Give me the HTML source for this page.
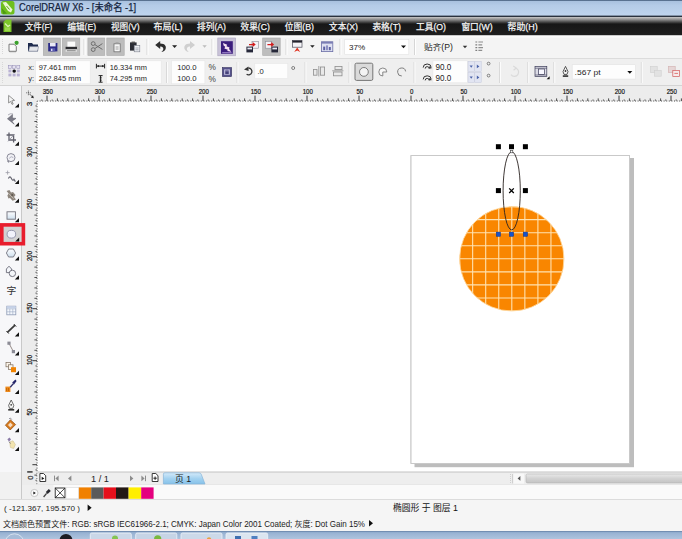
<!DOCTYPE html>
<html lang="zh"><head><meta charset="utf-8"><title>CorelDRAW X6</title>
<style>
html,body{margin:0;padding:0;background:#fff;overflow:hidden}
body{width:682px;height:539px;position:relative}
svg{display:block;position:absolute;left:0;top:0;font-family:"Liberation Sans","Noto Sans CJK SC",sans-serif}
</style></head><body>
<svg width="682" height="539" viewBox="0 0 682 539">
<defs>
<linearGradient id="gTitle" x1="0" y1="0" x2="0" y2="1"><stop offset="0" stop-color="#a6bfdd"/><stop offset="0.35" stop-color="#b5cce8"/><stop offset="1" stop-color="#bfd5ee"/></linearGradient>
<linearGradient id="gMenu" x1="0" y1="0" x2="0" y2="1"><stop offset="0" stop-color="#2a323e"/><stop offset="0.055" stop-color="#2a323e"/><stop offset="0.085" stop-color="#c2c2c2"/><stop offset="0.2" stop-color="#8c8c8c"/><stop offset="0.33" stop-color="#454545"/><stop offset="0.42" stop-color="#171717"/><stop offset="1" stop-color="#1f1f1f"/></linearGradient>
<linearGradient id="gTab" x1="0" y1="0" x2="0" y2="1"><stop offset="0" stop-color="#d4eaf9"/><stop offset="0.5" stop-color="#a4d2f0"/><stop offset="1" stop-color="#86c2ea"/></linearGradient>
<linearGradient id="gScroll" x1="0" y1="0" x2="0" y2="1"><stop offset="0" stop-color="#e9e9e9"/><stop offset="0.5" stop-color="#d2d2d2"/><stop offset="1" stop-color="#c4c4c4"/></linearGradient>
<linearGradient id="gTask" x1="0" y1="0" x2="0" y2="1"><stop offset="0" stop-color="#93aed0"/><stop offset="1" stop-color="#aec4de"/></linearGradient>
</defs>
<rect x="0" y="0" width="682" height="539" fill="#ffffff" />
<rect x="0" y="0" width="682" height="16" fill="url(#gTitle)" />
<rect x="0" y="0" width="682" height="0.8" fill="#465e7e" />
<rect x="0" y="15.6" width="682" height="20" fill="url(#gMenu)" />
<rect x="0" y="35.6" width="682" height="22.4" fill="#f4f4f4" />
<rect x="0" y="35.6" width="682" height="2" fill="#fbfbfb" />
<rect x="0" y="58" width="682" height="28" fill="#efefef" />
<line x1="0" y1="58.5" x2="682" y2="58.5" stroke="#dcdcdc" stroke-width="1" />
<rect x="22" y="86" width="660" height="15.5" fill="#ececec" />
<line x1="0" y1="85.5" x2="682" y2="85.5" stroke="#d4d4d4" stroke-width="1" />
<rect x="0" y="86" width="22" height="414" fill="#f7f7f9" />
<line x1="21.5" y1="86" x2="21.5" y2="486" stroke="#c9c9c9" stroke-width="1" />
<rect x="22" y="101" width="15.5" height="385" fill="#ececec" />
<rect x="37.5" y="101.5" width="644.5" height="370" fill="#ffffff" />
<g><rect x="1" y="1" width="13.5" height="13.5" rx="2.5" fill="#6fbf1e"/><path d="M2.5 2.5 L6 2 L12.5 9.5 L11 12.5 L8 11 Z" fill="#eaf7d2"/><path d="M1.5 8 L7 13.5 L3 14 Z" fill="#4e9a12"/><path d="M6.5 6 L9.5 9.5" stroke="#5aa818" stroke-width="1"/></g>
<text x="19" y="11.2" font-size="10.3" fill="#16263f" textLength="117" lengthAdjust="spacingAndGlyphs" stroke="#16263f" stroke-width="0.25">CorelDRAW X6 - [未命名 -1]</text>
<g><path d="M3.5 22 L6 19.5 L11.5 19.5 L11.5 32 L3.5 32 Z" fill="#7cc62a"/><path d="M5 23.5 L8 26.5 L10 25" stroke="#d8f0b0" stroke-width="1.4" fill="none"/><rect x="5" y="27.5" width="5" height="3.5" fill="#9bd84c"/></g>
<text x="25" y="29.9" font-size="9.3" fill="#f6f6f6" textLength="27.4" lengthAdjust="spacingAndGlyphs" stroke="#f6f6f6" stroke-width="0.25">文件(F)</text>
<text x="67.5" y="29.9" font-size="9.3" fill="#f6f6f6" textLength="28.5" lengthAdjust="spacingAndGlyphs" stroke="#f6f6f6" stroke-width="0.25">编辑(E)</text>
<text x="111" y="29.9" font-size="9.3" fill="#f6f6f6" textLength="28.7" lengthAdjust="spacingAndGlyphs" stroke="#f6f6f6" stroke-width="0.25">视图(V)</text>
<text x="153.5" y="29.9" font-size="9.3" fill="#f6f6f6" textLength="29.0" lengthAdjust="spacingAndGlyphs" stroke="#f6f6f6" stroke-width="0.25">布局(L)</text>
<text x="197" y="29.9" font-size="9.3" fill="#f6f6f6" textLength="29" lengthAdjust="spacingAndGlyphs" stroke="#f6f6f6" stroke-width="0.25">排列(A)</text>
<text x="240.6" y="29.9" font-size="9.3" fill="#f6f6f6" textLength="29.2" lengthAdjust="spacingAndGlyphs" stroke="#f6f6f6" stroke-width="0.25">效果(C)</text>
<text x="284.7" y="29.9" font-size="9.3" fill="#f6f6f6" textLength="29.3" lengthAdjust="spacingAndGlyphs" stroke="#f6f6f6" stroke-width="0.25">位图(B)</text>
<text x="329" y="29.9" font-size="9.3" fill="#f6f6f6" textLength="29" lengthAdjust="spacingAndGlyphs" stroke="#f6f6f6" stroke-width="0.25">文本(X)</text>
<text x="372.4" y="29.9" font-size="9.3" fill="#f6f6f6" textLength="28.6" lengthAdjust="spacingAndGlyphs" stroke="#f6f6f6" stroke-width="0.25">表格(T)</text>
<text x="416" y="29.9" font-size="9.3" fill="#f6f6f6" textLength="30" lengthAdjust="spacingAndGlyphs" stroke="#f6f6f6" stroke-width="0.25">工具(O)</text>
<text x="461.4" y="29.9" font-size="9.3" fill="#f6f6f6" textLength="31.2" lengthAdjust="spacingAndGlyphs" stroke="#f6f6f6" stroke-width="0.25">窗口(W)</text>
<text x="507.5" y="29.9" font-size="9.3" fill="#f6f6f6" textLength="30.2" lengthAdjust="spacingAndGlyphs" stroke="#f6f6f6" stroke-width="0.25">帮助(H)</text>
<line x1="2.5" y1="39" x2="2.5" y2="55" stroke="#d8d8d8" stroke-width="1" stroke-dasharray="1 1"/>
<g><path d="M9 44.2 L14 44.2 L16.3 46.5 L16.3 51.3 L9 51.3 Z" fill="#fafafa" stroke="#6c6c6c" stroke-width="0.9"/><circle cx="16.6" cy="42.8" r="2.1" fill="#3aa12c"/><path d="M9.5 52.6 H16" stroke="#ddd" stroke-width="1"/></g>
<g><path d="M28 43 L32 43 L33.2 44.6 L38 44.6 L38 51.2 L28 51.2 Z" fill="#1e2b4d"/><path d="M29.6 46.6 L38.6 46.6 L37.6 51.2 L28.6 51.2 Z" fill="#e4e6ea" stroke="#6a7388" stroke-width="0.5"/></g>
<rect x="43.3" y="38" width="17.1" height="17.5" fill="#bdbdbd" stroke="#a8a8a8" stroke-width="0.6"/>
<g><rect x="48.2" y="43" width="9.2" height="8.4" fill="#2b2b88"/><rect x="50" y="43" width="5.6" height="3.4" fill="#e9e9f6"/><rect x="50.4" y="48.2" width="4.8" height="3.2" fill="#5b5bb0"/><rect x="51" y="48.8" width="1.4" height="2.2" fill="#dcdcf4"/></g>
<rect x="62.3" y="38" width="17.5" height="17.5" fill="#bdbdbd" stroke="#a8a8a8" stroke-width="0.6"/>
<g><rect x="67.4" y="41.6" width="7.8" height="5.6" fill="#fbfbfb"/><rect x="65.6" y="46.8" width="11.4" height="2.6" fill="#2c2c30"/><rect x="65.6" y="49.4" width="11.4" height="2.4" fill="#dcdcdc"/><rect x="67" y="50.2" width="8.6" height="1" fill="#8a8a8a"/></g>
<line x1="84" y1="39" x2="84" y2="55" stroke="#d6d6d6" stroke-width="1" />
<line x1="85" y1="39" x2="85" y2="55" stroke="#ffffff" stroke-width="1" />
<rect x="87.9" y="38" width="16.9" height="17.5" fill="#bdbdbd" stroke="#a8a8a8" stroke-width="0.6"/>
<g fill="none" stroke="#6e6e6e" stroke-width="1"><circle cx="93.2" cy="43.6" r="1.9"/><circle cx="93.2" cy="49.6" r="1.9"/><path d="M94.8 44.6 L102.4 49.4 M94.8 48.6 L102.4 43.6"/></g>
<rect x="106.8" y="38" width="17.4" height="17.5" fill="#bdbdbd" stroke="#a8a8a8" stroke-width="0.6"/>
<g><rect x="114" y="43.8" width="6.2" height="8" fill="#f6f6f6" stroke="#707070" stroke-width="0.8"/><path d="M115.6 47 H118.6 M115.6 49 H118.6" stroke="#8a8a8a" stroke-width="0.8"/><rect x="115.6" y="42.4" width="3" height="1.6" fill="#9a9a9a"/></g>
<g><rect x="130" y="42.4" width="6.6" height="8.2" fill="#2a2c34"/><rect x="131.6" y="41.6" width="3.4" height="1.6" fill="#555"/><rect x="134.2" y="45.4" width="5.6" height="6.4" fill="#eef0f4" stroke="#7a7e8a" stroke-width="0.6"/><path d="M135.4 48 H138.6 M135.4 49.8 H138.6" stroke="#8a8f9e" stroke-width="0.7"/></g>
<line x1="147" y1="39" x2="147" y2="55" stroke="#d6d6d6" stroke-width="1" />
<line x1="148" y1="39" x2="148" y2="55" stroke="#ffffff" stroke-width="1" />
<g><path d="M155.2 45 L160.2 41 L160.2 43.6 C165.2 43.6 166.8 46.6 165.4 49.6 C164.6 51.2 163 52 161.4 52 C163.4 50.6 163.8 48.8 162.8 47.6 C162.2 46.8 161.2 46.5 160.2 46.5 L160.2 49 Z" fill="#2e2e2e"/></g>
<path d="M172.1 45.15 L177.1 45.15 L174.6 47.949999999999996 Z" fill="#222"/>
<g><path d="M195 45 L190 41 L190 43.6 C185 43.6 183.4 46.6 184.8 49.6 C185.6 51.2 187.2 52 188.8 52 C186.8 50.6 186.4 48.8 187.4 47.6 C188 46.8 189 46.5 190 46.5 L190 49 Z" fill="#cfcfcf"/></g>
<path d="M202.4 45.3 L206.79999999999998 45.3 L204.6 47.8 Z" fill="#bdbdbd"/>
<line x1="212" y1="39" x2="212" y2="55" stroke="#d6d6d6" stroke-width="1" />
<line x1="213" y1="39" x2="213" y2="55" stroke="#ffffff" stroke-width="1" />
<rect x="217.8" y="38" width="17.8" height="17.8" fill="#c9c3d8" stroke="#aaa3bd" stroke-width="0.6"/>
<g><rect x="221" y="41.2" width="11.8" height="12.6" fill="#3b1d7c"/><path d="M223 43 L227.2 44.8 L226.4 46.2 L229.6 47.6 L229 49 L231.4 51.8 L227.2 51 L227.8 49.8 L224.4 48.4 L225.2 46.8 L223.6 45.6 Z" fill="#f6e2f2"/><rect x="222.2" y="52.2" width="9.4" height="1" fill="#a58bd0"/></g>
<g><rect x="252" y="41.4" width="6.4" height="6.8" fill="#f2f2f6" stroke="#8a8a96" stroke-width="0.6"/><rect x="246.4" y="46.6" width="6.6" height="5.8" fill="#26283a"/><rect x="247.4" y="47.6" width="4.6" height="1.8" fill="#e8e8f4"/><path d="M249 44.6 H254.4 M252.6 42.8 L254.8 44.6 L252.6 46.4" stroke="#d21c1c" stroke-width="1.2" fill="none"/></g>
<rect x="262.7" y="38" width="17.5" height="17.5" fill="#bdbdbd" stroke="#a8a8a8" stroke-width="0.6"/>
<g><rect x="265.4" y="41.4" width="6.4" height="6.8" fill="#f2f2f6" stroke="#8a8a96" stroke-width="0.6"/><rect x="271.4" y="46.6" width="6.6" height="5.8" fill="#26283a"/><rect x="272.4" y="47.6" width="4.6" height="1.8" fill="#e8e8f4"/><path d="M267.4 44.6 H272.8 M271 42.8 L273.2 44.6 L271 46.4" stroke="#d21c1c" stroke-width="1.2" fill="none"/></g>
<line x1="286" y1="39" x2="286" y2="55" stroke="#d6d6d6" stroke-width="1" />
<line x1="287" y1="39" x2="287" y2="55" stroke="#ffffff" stroke-width="1" />
<g><rect x="292.4" y="40.6" width="9.6" height="6.6" fill="#f4f4f8" stroke="#4a4a58" stroke-width="0.7"/><rect x="292.4" y="40.6" width="9.6" height="2" fill="#23232e"/><path d="M294.2 52 L297.2 47.6 L300.2 52 L297.2 50.4 Z" fill="#e0301e"/></g>
<path d="M310.09999999999997 45.25 L314.7 45.25 L312.4 47.849999999999994 Z" fill="#222"/>
<g><rect x="321.4" y="41.8" width="11.4" height="9.8" fill="#dfe1f1" stroke="#6a6da6" stroke-width="0.8"/><rect x="321.4" y="41.8" width="11.4" height="1.8" fill="#7a7db4"/><rect x="323.2" y="46.6" width="2" height="3.6" fill="#5c60a2"/><rect x="326" y="45.4" width="2" height="4.8" fill="#8d90c4"/><rect x="328.8" y="47" width="2" height="3.2" fill="#5c60a2"/></g>
<line x1="340" y1="39" x2="340" y2="55" stroke="#d6d6d6" stroke-width="1" />
<line x1="341" y1="39" x2="341" y2="55" stroke="#ffffff" stroke-width="1" />
<rect x="344.7" y="39.3" width="64.1" height="15.3" fill="#ffffff" stroke="#e2e2e2" stroke-width="0.6"/>
<text x="349" y="49.6" font-size="8.1" fill="#222" textLength="16.2" lengthAdjust="spacingAndGlyphs" >37%</text>
<path d="M401.0 45.55 L406.0 45.55 L403.5 48.349999999999994 Z" fill="#111"/>
<line x1="414.5" y1="39" x2="414.5" y2="55" stroke="#d6d6d6" stroke-width="1" />
<line x1="415.5" y1="39" x2="415.5" y2="55" stroke="#ffffff" stroke-width="1" />
<text x="424" y="49.8" font-size="8.4" fill="#222" textLength="28.8" lengthAdjust="spacingAndGlyphs" >贴齐(P)</text>
<path d="M462.8 45.699999999999996 L467.2 45.699999999999996 L465 48.199999999999996 Z" fill="#333"/>
<g stroke="#7e7e7e" stroke-width="1.2"><path d="M475.4 42 H477.2 M475.4 44.8 H477.2 M475.4 47.6 H477.2 M475.4 50.4 H477.2"/><path d="M478.4 42 H483 M478.4 44.8 H482.2 M478.4 47.6 H483 M478.4 50.4 H482.2" stroke="#8e8e8e"/></g>
<line x1="2.5" y1="62" x2="2.5" y2="83" stroke="#d8d8d8" stroke-width="1" stroke-dasharray="1 1"/>
<rect x="8.4" y="65.6" width="3" height="2.8" fill="#e4e1f0" stroke="#8f88b4" stroke-width="0.5"/>
<rect x="12.6" y="65.6" width="3" height="2.8" fill="#e4e1f0" stroke="#8f88b4" stroke-width="0.5"/>
<rect x="16.8" y="65.6" width="3" height="2.8" fill="#e4e1f0" stroke="#8f88b4" stroke-width="0.5"/>
<rect x="8.4" y="69.6" width="3" height="2.8" fill="#b9b2d4" stroke="#8f88b4" stroke-width="0"/>
<rect x="12.6" y="69.6" width="3" height="2.8" fill="#b9b2d4" stroke="#8f88b4" stroke-width="0"/>
<rect x="16.8" y="69.6" width="3" height="2.8" fill="#b9b2d4" stroke="#8f88b4" stroke-width="0"/>
<rect x="8.4" y="73.6" width="3" height="2.8" fill="#b9b2d4" stroke="#8f88b4" stroke-width="0"/>
<rect x="12.6" y="73.6" width="3" height="2.8" fill="#b9b2d4" stroke="#8f88b4" stroke-width="0"/>
<rect x="16.8" y="73.6" width="3" height="2.8" fill="#b9b2d4" stroke="#8f88b4" stroke-width="0"/>
<circle cx="14.2" cy="71.1" r="1.7" fill="#111"/>
<text x="28.2" y="70" font-size="7.6" fill="#333" >x:</text>
<text x="28.2" y="81.4" font-size="7.6" fill="#333" >y:</text>
<rect x="35.6" y="60.8" width="54.6" height="23" fill="#fdfdfd" stroke="#e6e6e6" stroke-width="0.6"/>
<text x="38.7" y="69.8" font-size="7.5" fill="#1e1e1e" textLength="37.4" lengthAdjust="spacingAndGlyphs" >97.461 mm</text>
<text x="38.7" y="81.2" font-size="7.5" fill="#1e1e1e" textLength="42.4" lengthAdjust="spacingAndGlyphs" >262.845 mm</text>
<g stroke="#222" stroke-width="1" fill="#222"><path d="M96.4 63.8 V68.4 M104.6 63.8 V68.4 M97 66.1 H104" fill="none"/><path d="M97 66.1 L99 64.9 V67.3 Z M104 66.1 L102 64.9 V67.3 Z" stroke="none"/><path d="M98.6 75.6 H102.6 M98.6 82.2 H102.6 M100.6 76 V82" fill="none"/><path d="M100.6 76.2 L99.3 78.2 H101.9 Z M100.6 81.8 L99.3 79.8 H101.9 Z" stroke="none"/></g>
<rect x="106.4" y="60.8" width="54.8" height="23" fill="#fdfdfd" stroke="#e6e6e6" stroke-width="0.6"/>
<text x="109.7" y="69.8" font-size="7.5" fill="#1e1e1e" textLength="37.2" lengthAdjust="spacingAndGlyphs" >16.334 mm</text>
<text x="109.7" y="81.2" font-size="7.5" fill="#1e1e1e" textLength="37.2" lengthAdjust="spacingAndGlyphs" >74.295 mm</text>
<line x1="166.5" y1="62" x2="166.5" y2="83" stroke="#d9d9d9" stroke-width="1" />
<line x1="167.5" y1="62" x2="167.5" y2="83" stroke="#fcfcfc" stroke-width="1" />
<rect x="171.5" y="60.8" width="33.4" height="23" fill="#fdfdfd" stroke="#e6e6e6" stroke-width="0.6"/>
<text x="177.2" y="69.8" font-size="7.5" fill="#1e1e1e" textLength="19.4" lengthAdjust="spacingAndGlyphs" >100.0</text>
<text x="177.2" y="81.2" font-size="7.5" fill="#1e1e1e" textLength="19.4" lengthAdjust="spacingAndGlyphs" >100.0</text>
<text x="208.6" y="70.2" font-size="8.6" fill="#444" textLength="7.4" lengthAdjust="spacingAndGlyphs" >%</text>
<text x="208.6" y="81.6" font-size="8.6" fill="#444" textLength="7.4" lengthAdjust="spacingAndGlyphs" >%</text>
<g><rect x="222.4" y="67.6" width="9.2" height="9" fill="#55518a" stroke="#34315e" stroke-width="0.6"/><rect x="224.2" y="69.4" width="5.6" height="5.4" fill="#cfcce8"/><rect x="225.2" y="71.2" width="3.6" height="3" fill="#45417a"/><path d="M225.8 71.2 V70.2 H228.2 V71.2" stroke="#45417a" stroke-width="0.7" fill="none"/></g>
<line x1="237" y1="62" x2="237" y2="83" stroke="#d9d9d9" stroke-width="1" />
<line x1="238" y1="62" x2="238" y2="83" stroke="#fcfcfc" stroke-width="1" />
<g><path d="M248.4 68 A3.4 3.4 0 1 1 246.6 74.2" fill="none" stroke="#333" stroke-width="1.3"/><path d="M244 69.6 L248.4 66.6 L248.6 71 Z" fill="#333"/></g>
<rect x="254.8" y="63.3" width="33" height="15.3" fill="#fdfdfd" stroke="#e6e6e6" stroke-width="0.6"/>
<text x="257.4" y="74" font-size="7.6" fill="#1e1e1e" >.0</text>
<circle cx="293.2" cy="68" r="1.5" fill="none" stroke="#555" stroke-width="0.7"/>
<line x1="305" y1="62" x2="305" y2="83" stroke="#d9d9d9" stroke-width="1" />
<line x1="306" y1="62" x2="306" y2="83" stroke="#fcfcfc" stroke-width="1" />
<g fill="#e9e9e9" stroke="#8e8e8e" stroke-width="0.8"><rect x="313.4" y="69.4" width="3.6" height="5.8"/><rect x="320.4" y="67" width="4.2" height="8.2"/><path d="M318.8 66 V76.4" /></g>
<g fill="#e9e9e9" stroke="#8e8e8e" stroke-width="0.8"><rect x="335" y="66.4" width="7" height="3.2"/><rect x="333.4" y="72" width="8.6" height="3.8"/><path d="M332.2 70.8 H343.4"/></g>
<line x1="349" y1="62" x2="349" y2="83" stroke="#d9d9d9" stroke-width="1" />
<line x1="350" y1="62" x2="350" y2="83" stroke="#fcfcfc" stroke-width="1" />
<rect x="355" y="63.2" width="17.8" height="17.2" rx="1.5" fill="#dadada" stroke="#767676" stroke-width="1"/>
<circle cx="363.9" cy="71.9" r="4.4" fill="#f4f4f4" stroke="#6f6f6f" stroke-width="0.9"/>
<path d="M382.8 72 L386.8 72 A4 4 0 1 0 382.8 76 Z" fill="#f8f8f8" stroke="#7d7d7d" stroke-width="0.9"/>
<path d="M405.6 71.4 A4 4 0 1 0 401.8 76" fill="none" stroke="#7d7d7d" stroke-width="1"/>
<line x1="414" y1="62" x2="414" y2="83" stroke="#d9d9d9" stroke-width="1" />
<line x1="415" y1="62" x2="415" y2="83" stroke="#fcfcfc" stroke-width="1" />
<g fill="none" stroke="#333" stroke-width="1"><path d="M423.2 67.60000000000001 A4 3.6 0 1 1 431.2 67.60000000000001"/><path d="M425.2 68.60000000000001 A2 2 0 1 1 429.2 68.60000000000001"/><path d="M429.8 66.0 L431.6 68.4 L428.6 68.4 Z" fill="#333" stroke="none"/></g>
<g fill="none" stroke="#333" stroke-width="1"><path d="M423.2 79.4 A4 3.6 0 1 1 431.2 79.4"/><path d="M425.2 80.4 A2 2 0 1 1 429.2 80.4"/><path d="M429.8 77.8 L431.6 80.2 L428.6 80.2 Z" fill="#333" stroke="none"/></g>
<rect x="432.9" y="60.8" width="34.4" height="22" fill="#fdfdfd" stroke="#e6e6e6" stroke-width="0.6"/>
<text x="435.4" y="70" font-size="8.2" fill="#1e1e1e" textLength="15.8" lengthAdjust="spacingAndGlyphs" >90.0</text>
<text x="435.4" y="81.4" font-size="8.2" fill="#1e1e1e" textLength="15.8" lengthAdjust="spacingAndGlyphs" >90.0</text>
<rect x="468" y="61.4" width="6.4" height="10" fill="#e2e5f2" stroke="#c4c8dc" stroke-width="0.5"/><rect x="474.8" y="61.4" width="6.4" height="10" fill="#e2e5f2" stroke="#c4c8dc" stroke-width="0.5"/>
<path d="M469.6 65.4 H472.8 L471.2 67.8 Z" fill="#4a62a8"/><path d="M476.8 64.6 V68.2 L479.4 66.4 Z" fill="#4a62a8"/>
<rect x="468" y="72.4" width="6.4" height="10" fill="#e2e5f2" stroke="#c4c8dc" stroke-width="0.5"/><rect x="474.8" y="72.4" width="6.4" height="10" fill="#e2e5f2" stroke="#c4c8dc" stroke-width="0.5"/>
<path d="M469.6 76.4 H472.8 L471.2 78.80000000000001 Z" fill="#4a62a8"/><path d="M476.8 75.60000000000001 V79.2 L479.4 77.4 Z" fill="#4a62a8"/>
<circle cx="488.6" cy="63.6" r="1.4" fill="none" stroke="#555" stroke-width="0.7"/><circle cx="488.6" cy="75.6" r="1.4" fill="none" stroke="#555" stroke-width="0.7"/>
<line x1="499.5" y1="62" x2="499.5" y2="83" stroke="#d9d9d9" stroke-width="1" />
<line x1="500.5" y1="62" x2="500.5" y2="83" stroke="#fcfcfc" stroke-width="1" />
<g fill="none" stroke="#dadada" stroke-width="1.2"><path d="M511 74.6 A4.2 4.2 0 1 0 515 68"/><path d="M513.2 66 L516.2 68 L513.6 70.2"/></g>
<line x1="527.8" y1="62" x2="527.8" y2="83" stroke="#d9d9d9" stroke-width="1" />
<line x1="528.8" y1="62" x2="528.8" y2="83" stroke="#fcfcfc" stroke-width="1" />
<g><rect x="535" y="66.4" width="11.8" height="10.2" fill="#dcdce6" stroke="#3c3c58" stroke-width="0.7"/><rect x="538.6" y="69" width="6" height="5.4" fill="#f8f8ff" stroke="#3c3c58" stroke-width="0.7"/><path d="M535 68.2 H547 M535 75 H547" stroke="#3c3c58" stroke-width="0.6"/><path d="M549.6 76.2 V79.2 H546.6 Z" fill="#111"/></g>
<line x1="553.8" y1="62" x2="553.8" y2="83" stroke="#d9d9d9" stroke-width="1" />
<line x1="554.8" y1="62" x2="554.8" y2="83" stroke="#fcfcfc" stroke-width="1" />
<g><path d="M565.5 66.4 L568 71.6 L567 74.4 H564 L563 71.6 Z" fill="#f4f4f4" stroke="#333" stroke-width="0.8"/><circle cx="565.5" cy="71" r="0.9" fill="#333"/><rect x="562.8" y="75.2" width="5.4" height="1.8" fill="#444"/></g>
<rect x="572.2" y="64.7" width="63.4" height="14.4" fill="#fdfdfd" stroke="#e2e2e2" stroke-width="0.6"/>
<text x="574.6" y="74.8" font-size="7.8" fill="#1e1e1e" textLength="26" lengthAdjust="spacingAndGlyphs" >.567 pt</text>
<path d="M627.3 70.95 L632.3 70.95 L629.8 73.75 Z" fill="#111"/>
<line x1="641.3" y1="62" x2="641.3" y2="83" stroke="#d9d9d9" stroke-width="1" />
<line x1="642.3" y1="62" x2="642.3" y2="83" stroke="#fcfcfc" stroke-width="1" />
<g fill="#e2e2e2" stroke="#cfcfcf" stroke-width="0.6"><rect x="650.6" y="66.6" width="6.6" height="5.8"/><rect x="654.6" y="70.4" width="6.6" height="5.8"/></g>
<g stroke-width="0.7"><rect x="668.6" y="66.6" width="6.6" height="5.8" fill="#e6d6d6" stroke="#d4b4b4"/><rect x="672.8" y="70.4" width="6.8" height="6.2" fill="#f6eaea" stroke="#d05a5a"/><path d="M674.4 73.4 H678" stroke="#d84848"/></g>
<line x1="37" y1="101" x2="682" y2="101" stroke="#4a4a4a" stroke-width="1" stroke-dasharray="1 1.6"/>
<path d="M47.0 95.6 V101 M99.0 95.6 V101 M151.0 95.6 V101 M203.0 95.6 V101 M255.0 95.6 V101 M307.0 95.6 V101 M359.0 95.6 V101 M411.0 95.6 V101 M463.0 95.6 V101 M515.0 95.6 V101 M567.0 95.6 V101 M619.0 95.6 V101 M671.0 95.6 V101" stroke="#222" stroke-width="0.9" fill="none"/>
<path d="M57.4 98.4 V101 M67.8 98.4 V101 M78.2 98.4 V101 M88.6 98.4 V101 M109.4 98.4 V101 M119.8 98.4 V101 M130.2 98.4 V101 M140.6 98.4 V101 M161.4 98.4 V101 M171.8 98.4 V101 M182.2 98.4 V101 M192.6 98.4 V101 M213.4 98.4 V101 M223.8 98.4 V101 M234.2 98.4 V101 M244.6 98.4 V101 M265.4 98.4 V101 M275.8 98.4 V101 M286.2 98.4 V101 M296.6 98.4 V101 M317.4 98.4 V101 M327.8 98.4 V101 M338.2 98.4 V101 M348.6 98.4 V101 M369.4 98.4 V101 M379.8 98.4 V101 M390.2 98.4 V101 M400.6 98.4 V101 M421.4 98.4 V101 M431.8 98.4 V101 M442.2 98.4 V101 M452.6 98.4 V101 M473.4 98.4 V101 M483.8 98.4 V101 M494.2 98.4 V101 M504.6 98.4 V101 M525.4 98.4 V101 M535.8 98.4 V101 M546.2 98.4 V101 M556.6 98.4 V101 M577.4 98.4 V101 M587.8 98.4 V101 M598.2 98.4 V101 M608.6 98.4 V101 M629.4 98.4 V101 M639.8 98.4 V101 M650.2 98.4 V101 M660.6 98.4 V101 M681.4 98.4 V101" stroke="#3a3a3a" stroke-width="0.9" fill="none"/>
<path d="M41.8 99.3 V101 M52.2 99.3 V101 M62.6 99.3 V101 M73.0 99.3 V101 M83.4 99.3 V101 M93.8 99.3 V101 M104.2 99.3 V101 M114.6 99.3 V101 M125.0 99.3 V101 M135.4 99.3 V101 M145.8 99.3 V101 M156.2 99.3 V101 M166.6 99.3 V101 M177.0 99.3 V101 M187.4 99.3 V101 M197.8 99.3 V101 M208.2 99.3 V101 M218.6 99.3 V101 M229.0 99.3 V101 M239.4 99.3 V101 M249.8 99.3 V101 M260.2 99.3 V101 M270.6 99.3 V101 M281.0 99.3 V101 M291.4 99.3 V101 M301.8 99.3 V101 M312.2 99.3 V101 M322.6 99.3 V101 M333.0 99.3 V101 M343.4 99.3 V101 M353.8 99.3 V101 M364.2 99.3 V101 M374.6 99.3 V101 M385.0 99.3 V101 M395.4 99.3 V101 M405.8 99.3 V101 M416.2 99.3 V101 M426.6 99.3 V101 M437.0 99.3 V101 M447.4 99.3 V101 M457.8 99.3 V101 M468.2 99.3 V101 M478.6 99.3 V101 M489.0 99.3 V101 M499.4 99.3 V101 M509.8 99.3 V101 M520.2 99.3 V101 M530.6 99.3 V101 M541.0 99.3 V101 M551.4 99.3 V101 M561.8 99.3 V101 M572.2 99.3 V101 M582.6 99.3 V101 M593.0 99.3 V101 M603.4 99.3 V101 M613.8 99.3 V101 M624.2 99.3 V101 M634.6 99.3 V101 M645.0 99.3 V101 M655.4 99.3 V101 M665.8 99.3 V101 M676.2 99.3 V101" stroke="#6a6a6a" stroke-width="0.9" fill="none"/>
<text x="47.8" y="94.3" font-size="7.6" fill="#111" textLength="10.2" lengthAdjust="spacingAndGlyphs" text-anchor="middle" stroke="#111" stroke-width="0.2">350</text>
<text x="99.8" y="94.3" font-size="7.6" fill="#111" textLength="10.2" lengthAdjust="spacingAndGlyphs" text-anchor="middle" stroke="#111" stroke-width="0.2">300</text>
<text x="151.8" y="94.3" font-size="7.6" fill="#111" textLength="10.2" lengthAdjust="spacingAndGlyphs" text-anchor="middle" stroke="#111" stroke-width="0.2">250</text>
<text x="203.8" y="94.3" font-size="7.6" fill="#111" textLength="10.2" lengthAdjust="spacingAndGlyphs" text-anchor="middle" stroke="#111" stroke-width="0.2">200</text>
<text x="255.8" y="94.3" font-size="7.6" fill="#111" textLength="10.2" lengthAdjust="spacingAndGlyphs" text-anchor="middle" stroke="#111" stroke-width="0.2">150</text>
<text x="307.8" y="94.3" font-size="7.6" fill="#111" textLength="10.2" lengthAdjust="spacingAndGlyphs" text-anchor="middle" stroke="#111" stroke-width="0.2">100</text>
<text x="359.8" y="94.3" font-size="7.6" fill="#111" textLength="6.8" lengthAdjust="spacingAndGlyphs" text-anchor="middle" stroke="#111" stroke-width="0.2">50</text>
<text x="411.8" y="94.3" font-size="7.6" fill="#111" textLength="3.4" lengthAdjust="spacingAndGlyphs" text-anchor="middle" stroke="#111" stroke-width="0.2">0</text>
<text x="463.8" y="94.3" font-size="7.6" fill="#111" textLength="6.8" lengthAdjust="spacingAndGlyphs" text-anchor="middle" stroke="#111" stroke-width="0.2">50</text>
<text x="515.8" y="94.3" font-size="7.6" fill="#111" textLength="10.2" lengthAdjust="spacingAndGlyphs" text-anchor="middle" stroke="#111" stroke-width="0.2">100</text>
<text x="567.8" y="94.3" font-size="7.6" fill="#111" textLength="10.2" lengthAdjust="spacingAndGlyphs" text-anchor="middle" stroke="#111" stroke-width="0.2">150</text>
<text x="619.8" y="94.3" font-size="7.6" fill="#111" textLength="10.2" lengthAdjust="spacingAndGlyphs" text-anchor="middle" stroke="#111" stroke-width="0.2">200</text>
<text x="671.8" y="94.3" font-size="7.6" fill="#111" textLength="10.2" lengthAdjust="spacingAndGlyphs" text-anchor="middle" stroke="#111" stroke-width="0.2">250</text>
<line x1="37" y1="101" x2="37" y2="486" stroke="#4a4a4a" stroke-width="1" stroke-dasharray="1 1.6"/>
<path d="M32.4 464.7 H37 M32.4 412.7 H37 M32.4 360.7 H37 M32.4 308.7 H37 M32.4 256.7 H37 M32.4 204.7 H37 M32.4 152.7 H37" stroke="#222" stroke-width="0.9" fill="none"/>
<path d="M34.4 475.1 H37 M34.4 454.3 H37 M34.4 443.9 H37 M34.4 433.5 H37 M34.4 423.1 H37 M34.4 402.3 H37 M34.4 391.9 H37 M34.4 381.5 H37 M34.4 371.1 H37 M34.4 350.3 H37 M34.4 339.9 H37 M34.4 329.5 H37 M34.4 319.1 H37 M34.4 298.3 H37 M34.4 287.9 H37 M34.4 277.5 H37 M34.4 267.1 H37 M34.4 246.3 H37 M34.4 235.9 H37 M34.4 225.5 H37 M34.4 215.1 H37 M34.4 194.3 H37 M34.4 183.9 H37 M34.4 173.5 H37 M34.4 163.1 H37 M34.4 142.3 H37 M34.4 131.9 H37 M34.4 121.5 H37 M34.4 111.1 H37" stroke="#3a3a3a" stroke-width="0.9" fill="none"/>
<path d="M35.3 480.3 H37 M35.3 469.9 H37 M35.3 459.5 H37 M35.3 449.1 H37 M35.3 438.7 H37 M35.3 428.3 H37 M35.3 417.9 H37 M35.3 407.5 H37 M35.3 397.1 H37 M35.3 386.7 H37 M35.3 376.3 H37 M35.3 365.9 H37 M35.3 355.5 H37 M35.3 345.1 H37 M35.3 334.7 H37 M35.3 324.3 H37 M35.3 313.9 H37 M35.3 303.5 H37 M35.3 293.1 H37 M35.3 282.7 H37 M35.3 272.3 H37 M35.3 261.9 H37 M35.3 251.5 H37 M35.3 241.1 H37 M35.3 230.7 H37 M35.3 220.3 H37 M35.3 209.9 H37 M35.3 199.5 H37 M35.3 189.1 H37 M35.3 178.7 H37 M35.3 168.3 H37 M35.3 157.9 H37 M35.3 147.5 H37 M35.3 137.1 H37 M35.3 126.7 H37 M35.3 116.3 H37 M35.3 105.9 H37" stroke="#6a6a6a" stroke-width="0.9" fill="none"/>
<text transform="translate(32.4,412.0) rotate(-90)" font-size="7.6" fill="#111" stroke="#111" stroke-width="0.2" text-anchor="middle" textLength="6.8" lengthAdjust="spacingAndGlyphs">50</text>
<text transform="translate(32.4,360.0) rotate(-90)" font-size="7.6" fill="#111" stroke="#111" stroke-width="0.2" text-anchor="middle" textLength="10.2" lengthAdjust="spacingAndGlyphs">100</text>
<text transform="translate(32.4,308.0) rotate(-90)" font-size="7.6" fill="#111" stroke="#111" stroke-width="0.2" text-anchor="middle" textLength="10.2" lengthAdjust="spacingAndGlyphs">150</text>
<text transform="translate(32.4,256.0) rotate(-90)" font-size="7.6" fill="#111" stroke="#111" stroke-width="0.2" text-anchor="middle" textLength="10.2" lengthAdjust="spacingAndGlyphs">200</text>
<text transform="translate(32.4,204.0) rotate(-90)" font-size="7.6" fill="#111" stroke="#111" stroke-width="0.2" text-anchor="middle" textLength="10.2" lengthAdjust="spacingAndGlyphs">250</text>
<text transform="translate(32.4,152.0) rotate(-90)" font-size="7.6" fill="#111" stroke="#111" stroke-width="0.2" text-anchor="middle" textLength="10.2" lengthAdjust="spacingAndGlyphs">300</text>
<text transform="translate(32.2,103.9) rotate(-90)" font-size="7.6" fill="#111" stroke="#111" stroke-width="0.2" text-anchor="middle">3</text>
<rect x="22" y="86" width="15.5" height="15.5" fill="#ececec" />
<g stroke="#444" stroke-width="0.8" fill="none"><path d="M28.4 90.6 V95.4 M26.2 92.8 H31" stroke-dasharray="1 0.8"/><path d="M29.4 93.8 L32.6 97"/><path d="M33.8 98.2 L30.8 97.4 L33 95.2 Z" fill="#222" stroke="none"/></g>
<rect x="27.2" y="471" width="5.4" height="1.8" fill="#555"/><text transform="translate(32.8,477.6) rotate(-90)" font-size="7.4" fill="#333" text-anchor="middle" stroke="#333" stroke-width="0.3">0</text>
<path d="M8.6 95.4 L14.6 100.4 L11.8 100.8 L13.2 104 L12 104.4 L10.6 101.4 L8.6 103 Z" fill="#f4f4f4" stroke="#7c7c7c" stroke-width="0.8"/>
<path d="M19.0 103.39999999999999 V107.6 H14.799999999999999 Z" fill="#111"/>
<g><path d="M7.4 118.8 L12.6 114.4 L12.4 118 L16 118.4 L12 121.2 L14.2 124.2 Z" fill="#7a7a86" stroke="#5a5a66" stroke-width="0.5"/><path d="M8 115 Q10 113 13 114" stroke="#9a9aa6" stroke-width="0.8" fill="none"/></g>
<path d="M19.0 122.19999999999999 V126.39999999999999 H14.799999999999999 Z" fill="#111"/>
<g stroke="#60606c" stroke-width="1.3" fill="none"><path d="M9 132.6 V140 H16"/><path d="M6.6 135 H13.6 V142.4"/><path d="M8 141.4 L14.6 134" stroke="#8a8a98" stroke-width="0.8"/></g>
<path d="M19.0 141.6 V145.8 H14.799999999999999 Z" fill="#111"/>
<g><circle cx="11" cy="157.6" r="4" fill="#f2f2f6" stroke="#8a8a98" stroke-width="1"/><path d="M9.2 158.4 Q11 155.4 13.4 157.6" stroke="#b0b0c0" stroke-width="1" fill="none"/><path d="M7.4 160.6 L9 162.4" stroke="#7a7a88" stroke-width="1.2"/></g>
<path d="M19.0 160.79999999999998 V165.0 H14.799999999999999 Z" fill="#111"/>
<g fill="none"><path d="M7.6 170.6 V174.6 M5.6 172.6 H9.6" stroke="#9a9aa6" stroke-width="0.8"/><path d="M8.4 178.4 Q10 175.4 11.4 178.4 T14 179.4 L15.4 181.6" stroke="#5e5e6a" stroke-width="1.1"/></g>
<path d="M19.0 179.79999999999998 V184.0 H14.799999999999999 Z" fill="#111"/>
<g><path d="M6.6 191 L9.4 190 L11 192.6 L13 192 L15.6 195 L14 197 L16 199.6 L12.6 200.8 L10 198 L8.4 198.4 L7.4 195.4 L8.6 193.6 Z" fill="#8e867e"/><path d="M8.6 193.4 L13.6 198.6" stroke="#c8c0b4" stroke-width="0.9"/><circle cx="12.2" cy="195" r="1" fill="#5c554e"/></g>
<path d="M19.0 198.6 V202.8 H14.799999999999999 Z" fill="#111"/>
<defs><linearGradient id="gRc" x1="0" y1="0" x2="0" y2="1"><stop offset="0" stop-color="#fdfdff"/><stop offset="1" stop-color="#cfe0ee"/></linearGradient></defs>
<rect x="7" y="211.8" width="8.4" height="7.4" fill="url(#gRc)" stroke="#70707c" stroke-width="0.9"/>
<path d="M19.0 218.0 V222.20000000000002 H14.799999999999999 Z" fill="#111"/>
<rect x="1.8" y="224.9" width="21.6" height="18.8" fill="#d2d2d2" stroke="#e81d2d" stroke-width="3.6"/>
<ellipse cx="11.4" cy="234.2" rx="4.3" ry="3.9" fill="#f1f2fb" stroke="#8c8fa6" stroke-width="0.9"/>
<path d="M19.2 237.4 V241.4 H15.2 Z" fill="#111"/>
<path d="M8.6 249 H13.4 L15.6 253 L13.4 257 H8.6 L6.4 253 Z" fill="url(#gRc)" stroke="#74747f" stroke-width="0.9"/>
<path d="M19.0 256.20000000000005 V260.40000000000003 H14.799999999999999 Z" fill="#111"/>
<g fill="#f4f6fa" stroke="#6c6c78" stroke-width="0.9"><path d="M6.4 269 L9 266.2 L11.6 269 V272.6 H6.4 Z"/><circle cx="12.4" cy="273.4" r="3.2"/></g>
<path d="M19.0 275.20000000000005 V279.40000000000003 H14.799999999999999 Z" fill="#111"/>
<text x="6.4" y="294.2" font-size="9.6" fill="#333" textLength="9.8" lengthAdjust="spacingAndGlyphs">字</text>
<g><rect x="6.8" y="306.2" width="9" height="8.6" fill="#f4f8fd" stroke="#8e9ab4" stroke-width="0.8"/><path d="M6.8 308.8 H15.8 M6.8 311.8 H15.8 M9.8 308.8 V314.8 M12.8 308.8 V314.8" stroke="#9aa6c0" stroke-width="0.6"/><rect x="6.8" y="306.2" width="9" height="2.2" fill="#c6d2e8"/></g>
<g><path d="M7.4 332.4 L15 325.2" stroke="#3a3a3a" stroke-width="1.8"/><path d="M6.4 331 L8.8 333.6 M13.8 324 L16.2 326.6" stroke="#3a3a3a" stroke-width="1"/></g>
<path d="M19.0 332.20000000000005 V336.40000000000003 H14.799999999999999 Z" fill="#111"/>
<g><path d="M9 343.4 L13.4 351.6" stroke="#8a7e7a" stroke-width="0.9"/><rect x="7.4" y="341.6" width="3.2" height="3.2" fill="#8c8c96"/><rect x="11.8" y="350" width="3.2" height="3.2" fill="#8c8c96"/></g>
<path d="M19.0 351.20000000000005 V355.40000000000003 H14.799999999999999 Z" fill="#111"/>
<g><rect x="6" y="362.4" width="4.4" height="4.4" fill="#fdf6ec" stroke="#7a6a5a" stroke-width="0.7"/><rect x="8.4" y="364.8" width="4.6" height="4.6" fill="#fdf6ec" stroke="#7a6a5a" stroke-width="0.7"/><rect x="11" y="367.2" width="5" height="5" fill="#f08200"/></g>
<path d="M19.0 370.8 V375.0 H14.799999999999999 Z" fill="#111"/>
<g><rect x="5.4" y="386.6" width="5" height="5.4" fill="#ee8a1c"/><path d="M6.6 388 V391 M8.6 388 V391" stroke="#b85c00" stroke-width="0.8"/><path d="M10.2 387.2 L13.4 383.6" stroke="#30306a" stroke-width="1.4"/><path d="M12.2 382.6 L15.4 379.6 L16.6 381 L14 384.4 Z" fill="#26266a"/></g>
<path d="M19.0 389.8 V394.0 H14.799999999999999 Z" fill="#111"/>
<g><path d="M11.2 400 L13.8 405.4 L12.8 408.4 H9.6 L8.6 405.4 Z" fill="#f6f6f6" stroke="#4a4a4a" stroke-width="0.8"/><circle cx="11.2" cy="404.8" r="0.9" fill="#444"/><rect x="8.2" y="409" width="6" height="1.6" fill="#333"/></g>
<path d="M19.0 408.6 V412.8 H14.799999999999999 Z" fill="#111"/>
<g><path d="M10.4 419.8 L15.6 424.6 L10.2 430 L5.4 425.2 Z" fill="#d87a1e" stroke="#8a4a10" stroke-width="0.7"/><path d="M8 425 L10.4 422.6 L12.8 425 L10.4 427.4 Z" fill="#f6dcc0"/><path d="M9 418.8 Q10.6 417 11.8 419.6" stroke="#7a7a86" stroke-width="0.8" fill="none"/></g>
<path d="M19.0 428.0 V432.2 H14.799999999999999 Z" fill="#111"/>
<g><path d="M7.4 439.2 L9.6 437.6 L11 439.6 L9 441.6 Z" fill="#8a7aa8"/><path d="M9.6 442 L13 440.8 L15.4 444.6 L13.6 448.6 L10.4 447.4 Z" fill="#f2e4b0" stroke="#c8b88a" stroke-width="0.5"/><path d="M9 441.6 L10.6 443.6" stroke="#7a7a86" stroke-width="0.9"/></g>
<path d="M19.0 446.8 V451.0 H14.799999999999999 Z" fill="#111"/>
<rect x="629" y="158" width="5" height="309" fill="#bdbdbd" />
<rect x="414.5" y="463.6" width="219.5" height="3.6" fill="#bdbdbd" />
<rect x="411" y="155.5" width="218.5" height="308" fill="#ffffff" stroke="#c9c9c9" stroke-width="1"/>
<line x1="410.6" y1="155.5" x2="410.6" y2="463.5" stroke="#d4d4d4" stroke-width="1" />
<clipPath id="cc"><circle cx="511.8" cy="258.8" r="52.2"/></clipPath>
<circle cx="511.8" cy="258.8" r="52.2" fill="#f98600"/>
<path d="M459.60 205.6 V312.0 M458.6 206.60 H565.0 M472.65 205.6 V312.0 M458.6 219.65 H565.0 M485.70 205.6 V312.0 M458.6 232.70 H565.0 M498.75 205.6 V312.0 M458.6 245.75 H565.0 M511.80 205.6 V312.0 M458.6 258.80 H565.0 M524.85 205.6 V312.0 M458.6 271.85 H565.0 M537.90 205.6 V312.0 M458.6 284.90 H565.0 M550.95 205.6 V312.0 M458.6 297.95 H565.0 M564.00 205.6 V312.0 M458.6 311.00 H565.0" stroke="#ffe2b0" stroke-width="1.1" fill="none" clip-path="url(#cc)"/>
<circle cx="511.8" cy="258.8" r="52.2" fill="none" stroke="#ffd9a0" stroke-width="0.8"/>
<ellipse cx="511.7" cy="190.8" rx="8.6" ry="39.1" fill="none" stroke="#2a2320" stroke-width="0.9"/>
<rect x="495.9" y="144.2" width="5" height="5" fill="#000"/>
<rect x="496.3" y="232.1" width="4.2" height="4.2" fill="#1652cc" stroke="#0c3584" stroke-width="0.5"/>
<rect x="509.0" y="144.2" width="5" height="5" fill="#000"/>
<rect x="509.4" y="232.1" width="4.2" height="4.2" fill="#1652cc" stroke="#0c3584" stroke-width="0.5"/>
<rect x="522.9" y="144.2" width="5" height="5" fill="#000"/>
<rect x="523.3" y="232.1" width="4.2" height="4.2" fill="#1652cc" stroke="#0c3584" stroke-width="0.5"/>
<rect x="495.9" y="188.1" width="5" height="5" fill="#000"/>
<rect x="522.9" y="188.1" width="5" height="5" fill="#000"/>
<path d="M509.2 188.4 L513.8 193 M513.8 188.4 L509.2 193" stroke="#000" stroke-width="1.3"/>
<rect x="510.4" y="150.4" width="2.4" height="2.4" fill="#fff" stroke="#444" stroke-width="0.6"/>
<rect x="37.5" y="472" width="644.5" height="12.6" fill="#eeeeee" />
<line x1="37.5" y1="472" x2="682" y2="472" stroke="#c2c2c2" stroke-width="1" />
<line x1="37.5" y1="484.8" x2="682" y2="484.8" stroke="#e2e2e2" stroke-width="1" />
<g><path d="M39.9 473.5 H43.5 L45.699999999999996 475.7 V481.5 H39.9 Z" fill="#fff" stroke="#222" stroke-width="0.9"/><path d="M41.699999999999996 476.7 V480.1 L44.3 478.4 Z" fill="#111"/></g>
<g fill="#8c8c8c"><rect x="54" y="475.6" width="1" height="5.6"/><path d="M58.6 475.6 V481.2 L55.4 478.4 Z"/><path d="M71.4 475.6 V481.2 L68 478.4 Z"/><path d="M130 475.6 V481.2 L133.4 478.4 Z"/><path d="M141.4 475.6 V481.2 L144.6 478.4 Z"/><rect x="145" y="475.6" width="1" height="5.6"/></g>
<text x="91" y="481.6" font-size="8.6" fill="#222" textLength="18" lengthAdjust="spacingAndGlyphs" >1 / 1</text>
<g><path d="M152.2 473.5 H155.8 L158 475.7 V481.5 H152.2 Z" fill="#fff" stroke="#222" stroke-width="0.9"/><path d="M153.4 478.2 H156.8 M155.1 476.5 V479.9" stroke="#111" stroke-width="0.9"/></g>
<path d="M163.4 484 V474.2 Q163.4 472.8 164.8 472.8 H199 Q200.6 472.8 201.2 474.2 L205 484 Z" fill="url(#gTab)" stroke="#86b4d8" stroke-width="0.7"/>
<text x="175" y="481.8" font-size="8.6" fill="#1a1a1a" textLength="16" lengthAdjust="spacingAndGlyphs" >页 1</text>
<line x1="510.5" y1="474" x2="510.5" y2="483.4" stroke="#cfcfcf" stroke-width="1" stroke-dasharray="1 1"/>
<line x1="512.5" y1="474" x2="512.5" y2="483.4" stroke="#cfcfcf" stroke-width="1" />
<rect x="513.6" y="473.6" width="10.4" height="10" fill="#f8f8f8"/><path d="M520.4 476 V480.8 L517.6 478.4 Z" fill="#555"/>
<rect x="526" y="474" width="160" height="9" rx="1.5" fill="url(#gScroll)" stroke="#b4b4b4" stroke-width="0.6"/>
<rect x="0" y="485" width="682" height="14.5" fill="#fafafa" />
<rect x="0" y="472" width="22" height="28" fill="#f1f1f1" />
<rect x="22" y="485" width="31.5" height="14.5" fill="#efefef" />
<line x1="21.5" y1="472" x2="21.5" y2="499.5" stroke="#c9c9c9" stroke-width="1" />
<circle cx="34.4" cy="493" r="3.6" fill="#fbfbfb" stroke="#b4b4b4" stroke-width="0.7"/><path d="M33.4 491.4 V494.6 L35.8 493 Z" fill="#111"/>
<g><path d="M43.6 497 L46.6 493.4" stroke="#444" stroke-width="1.3"/><path d="M45.8 492 L48.8 489 L50.8 491 L47.6 494 Z" fill="#2a2a30"/></g>
<g><rect x="55.2" y="488" width="9.8" height="9.8" fill="#fff" stroke="#222" stroke-width="0.9"/><path d="M55.2 488 L65 497.8 M65 488 L55.2 497.8" stroke="#222" stroke-width="0.8"/></g>
<rect x="66" y="487.4" width="12.8" height="11.4" fill="#ffffff"/>
<rect x="78.8" y="487.4" width="12.4" height="11.4" fill="#f08000"/>
<rect x="91.2" y="487.4" width="12.4" height="11.4" fill="#5a5a5a"/>
<rect x="103.6" y="487.4" width="12.4" height="11.4" fill="#e6101c"/>
<rect x="116" y="487.4" width="12.6" height="11.4" fill="#231815"/>
<rect x="128.6" y="487.4" width="12.6" height="11.4" fill="#ffee00"/>
<rect x="141.2" y="487.4" width="12.4" height="11.4" fill="#e4007e"/>
<rect x="66" y="487.4" width="12.8" height="11.4" fill="none" stroke="#d0d0d0" stroke-width="0.5"/>
<rect x="0" y="499.5" width="682" height="33" fill="#f5f5f5" />
<line x1="0" y1="499.5" x2="682" y2="499.5" stroke="#dcdcdc" stroke-width="1" />
<text x="4" y="511" font-size="8.1" fill="#222" textLength="76" lengthAdjust="spacingAndGlyphs" >( -121.367, 195.570 )</text>
<path d="M87.6 504.6 V511 L91.6 507.8 Z" fill="#111"/>
<text x="393" y="511.4" font-size="8.6" fill="#111" textLength="65" lengthAdjust="spacingAndGlyphs" >椭圆形 于 图层 1</text>
<text x="3" y="526.6" font-size="8.4" fill="#222" textLength="362" lengthAdjust="spacingAndGlyphs" >文档颜色预置文件: RGB: sRGB IEC61966-2.1; CMYK: Japan Color 2001 Coated; 灰度: Dot Gain 15%</text>
<path d="M369 520 V526.4 L373 523.2 Z" fill="#111"/>
<rect x="0" y="531.4" width="682" height="7.6" fill="url(#gTask)" />
<line x1="0" y1="531.6" x2="682" y2="531.6" stroke="#6b88ae" stroke-width="1" />
<circle cx="14.5" cy="543.4" r="9.6" fill="#a6bcd8" stroke="#dbe6f2" stroke-width="0.9"/>
<ellipse cx="66" cy="540" rx="6.4" ry="6" fill="#1c1c22"/>
<rect x="90.3" y="533" width="41.0" height="8" rx="1.5" fill="#cad7e8" stroke="#eef3f9" stroke-width="0.8"/>
<rect x="135.7" y="533" width="41.1" height="8" rx="1.5" fill="#c6d4e6" stroke="#eef3f9" stroke-width="0.8"/>
<rect x="181" y="533" width="41.0" height="8" rx="1.5" fill="#ccd9e9" stroke="#eef3f9" stroke-width="0.8"/>
<rect x="226" y="533" width="41.7" height="8" rx="1.5" fill="#dbe5f0" stroke="#eef3f9" stroke-width="0.8"/>
<circle cx="115" cy="538.6" r="3" fill="#84c452"/><circle cx="157.7" cy="538.8" r="3.6" fill="#78b83e"/><circle cx="209" cy="539.4" r="2.2" fill="#e8a040"/><rect x="235" y="536" width="6" height="4" fill="#3f6fb0"/><rect x="251.5" y="536" width="6" height="4" fill="#4f7fc0"/>
</svg>
</body></html>
